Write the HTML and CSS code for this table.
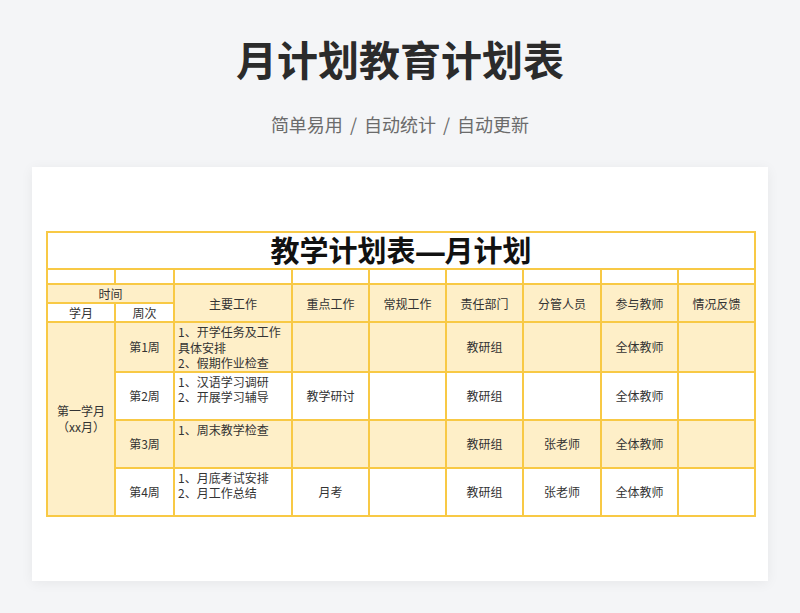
FILE: index.html
```html
<!DOCTYPE html>
<html lang="zh">
<head>
<meta charset="utf-8">
<link rel="stylesheet" href="styles.css">
</head>
<body>
<header class="hero">
  <h1 class="hero-title">月计划教育计划表</h1>
  <p class="hero-sub">简单易用 / 自动统计 / 自动更新</p>
</header>
<section class="card">
  <table class="plan">
    <colgroup>
      <col style="width:68px"><col style="width:59px"><col style="width:118px"><col style="width:77px"><col style="width:77px"><col style="width:77px"><col style="width:78px"><col style="width:77px"><col style="width:77px">
    </colgroup>
    <tr class="r-title"><td colspan="9" class="sheet-title">教学计划表<span class="dash">—</span>月计划</td></tr>
    <tr class="r-blank"><td></td><td></td><td></td><td></td><td></td><td></td><td></td><td></td><td></td></tr>
    <tr class="r-head1 fill">
      <td colspan="2">时间</td>
      <td rowspan="2">主要工作</td>
      <td rowspan="2">重点工作</td>
      <td rowspan="2">常规工作</td>
      <td rowspan="2">责任部门</td>
      <td rowspan="2">分管人员</td>
      <td rowspan="2">参与教师</td>
      <td rowspan="2">情况反馈</td>
    </tr>
    <tr class="r-head2">
      <td>学月</td>
      <td>周次</td>
    </tr>
    <tr class="r-data fill">
      <td rowspan="4" class="month">第一学月<br>（xx月）</td>
      <td>第1周</td>
      <td class="work">1、开学任务及工作具体安排<br>2、假期作业检查</td>
      <td></td><td></td>
      <td>教研组</td>
      <td></td>
      <td>全体教师</td>
      <td></td>
    </tr>
    <tr class="r-data">
      <td>第2周</td>
      <td class="work">1、汉语学习调研<br>2、开展学习辅导</td>
      <td>教学研讨</td><td></td>
      <td>教研组</td>
      <td></td>
      <td>全体教师</td>
      <td></td>
    </tr>
    <tr class="r-data fill">
      <td>第3周</td>
      <td class="work">1、周末教学检查</td>
      <td></td><td></td>
      <td>教研组</td>
      <td>张老师</td>
      <td>全体教师</td>
      <td></td>
    </tr>
    <tr class="r-data">
      <td>第4周</td>
      <td class="work">1、月底考试安排<br>2、月工作总结</td>
      <td>月考</td><td></td>
      <td>教研组</td>
      <td>张老师</td>
      <td>全体教师</td>
      <td></td>
    </tr>
  </table>
</section>
</body>
</html>
```

FILE: styles.css
```css
html, body {
  margin: 0;
  padding: 0;
}
body {
  background: #f4f5f7;
  font-family: "Noto Sans CJK SC", "Noto Sans", sans-serif;
  width: 800px;
  height: 613px;
  overflow: hidden;
}
.hero {
  text-align: center;
  padding-top: 30px;
}
.hero-title {
  margin: 0;
  font-size: 41px;
  line-height: 56px;
  font-weight: 700;
  color: #2b2b2b;
}
.hero-sub {
  margin: 26px 0 0;
  font-size: 18px;
  line-height: 24px;
  color: #6b6b6b;
  word-spacing: 3px;
}
.card {
  margin: 31px 0 0 32px;
  width: 736px;
  height: 414px;
  background: #fff;
  box-shadow: 0 2px 12px rgba(0,0,0,0.06);
  box-sizing: border-box;
  padding: 64px 0 0 14px;
}
.plan {
  border-collapse: collapse;
  table-layout: fixed;
  width: 708px;
  font-size: 12px;
  color: #333;
}
.plan td {
  border: 2px solid #f8c945;
  text-align: center;
  vertical-align: middle;
  padding: 0;
  line-height: 16px;
}
.r-title td {
  height: 35px;
}
.sheet-title {
  font-size: 29px;
  font-weight: 700;
  color: #111;
  line-height: 35px;
}
.dash {
  font-family: "DejaVu Sans", sans-serif;
  font-weight: 700;
  display: inline-block;
  transform: scaleX(1.1);
}
.r-blank td { height: 13px; }
.r-head1 td, .r-head2 td { height: 17px; line-height: 17px; }
.r-data td { height: 45px; }
.fill td, td.month { background: #feefc8; }
.r-head2 td { background: #fff; }
.plan td.work {
  text-align: left;
  vertical-align: top;
  padding: 1px 2px 0 3px;
  line-height: 15.5px;
}
```
